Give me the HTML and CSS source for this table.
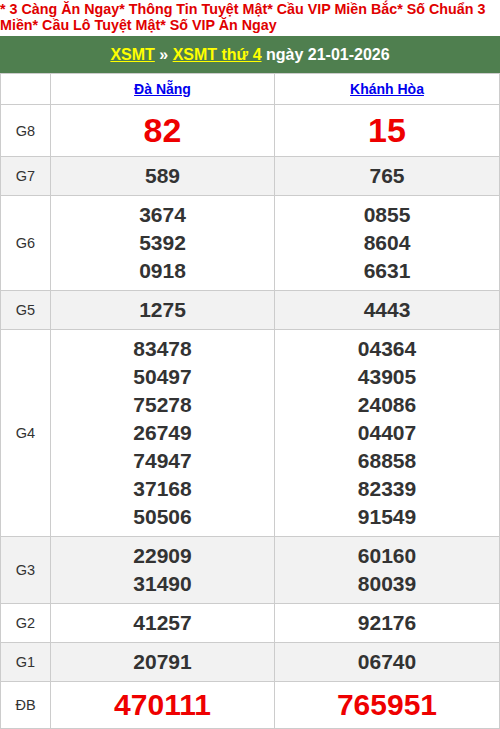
FILE: index.html
```html
<!DOCTYPE html>
<html lang="vi">
<head>
<meta charset="utf-8">
<link rel="stylesheet" href="styles.css">
</head>
<body>
<div class="promo">* 3 Càng Ăn Ngay* Thông Tin Tuyệt Mật* Cầu VIP Miền Bắc* Số Chuẩn 3 Miền* Cầu Lô Tuyệt Mật* Số VIP Ăn Ngay</div>
<div class="title"><a href="#">XSMT</a> » <a href="#">XSMT thứ 4</a> ngày 21-01-2026</div>
<table class="kq">
  <colgroup><col class="c0"><col class="c1"><col class="c2"></colgroup>
  <tr class="head"><th></th><th><a href="#">Đà Nẵng</a></th><th><a href="#">Khánh Hòa</a></th></tr>
  <tr class="g8"><td class="lbl">G8</td><td class="big">82</td><td class="big">15</td></tr>
  <tr class="alt"><td class="lbl">G7</td><td class="num">589</td><td class="num">765</td></tr>
  <tr><td class="lbl">G6</td><td class="num">3674<br>5392<br>0918</td><td class="num">0855<br>8604<br>6631</td></tr>
  <tr class="alt"><td class="lbl">G5</td><td class="num">1275</td><td class="num">4443</td></tr>
  <tr><td class="lbl">G4</td><td class="num">83478<br>50497<br>75278<br>26749<br>74947<br>37168<br>50506</td><td class="num">04364<br>43905<br>24086<br>04407<br>68858<br>82339<br>91549</td></tr>
  <tr class="alt"><td class="lbl">G3</td><td class="num">22909<br>31490</td><td class="num">60160<br>80039</td></tr>
  <tr><td class="lbl">G2</td><td class="num">41257</td><td class="num">92176</td></tr>
  <tr class="alt"><td class="lbl">G1</td><td class="num">20791</td><td class="num">06740</td></tr>
  <tr class="db"><td class="lbl">ĐB</td><td class="special">470111</td><td class="special">765951</td></tr>
</table>
</body>
</html>
```

FILE: styles.css
```css
html, body {
  margin: 0;
  padding: 0;
  background: #fff;
  font-family: "Liberation Sans", Arial, sans-serif;
}
.promo {
  color: #e00000;
  font-weight: bold;
  font-size: 14.3px;
  line-height: 16px;
  padding: 1px 0 3px 0;
  height: 32px;
}
.title {
  background: #4f7f4f;
  color: #fff;
  font-weight: bold;
  font-size: 16px;
  height: 37px;
  line-height: 37px;
  text-align: center;
}
.title a {
  color: #ffff00;
  text-decoration: underline;
}
.kq {
  width: 500px;
  border-collapse: collapse;
  table-layout: fixed;
}
.c0 { width: 50px; }
.c1 { width: 224px; }
.c2 { width: 225px; }
.kq th, .kq td {
  border: 1px solid #cccccc;
  text-align: center;
  padding: 5px 0;
}
.head th {
  height: 20px;
  font-size: 14px;
  font-weight: bold;
}
.head th a { color: #0000ee; text-decoration: underline; }
.alt td { background: #f2f2f2; }
.lbl {
  font-size: 14.5px;
  color: #333;
}
.num {
  font-size: 21px;
  line-height: 28px;
  font-weight: bold;
  color: #333;
}
.big {
  font-size: 34px;
  line-height: 41px;
  font-weight: bold;
  color: #ee0000;
}
.special {
  font-size: 30px;
  line-height: 36px;
  font-weight: bold;
  color: #ee0000;
}
```
